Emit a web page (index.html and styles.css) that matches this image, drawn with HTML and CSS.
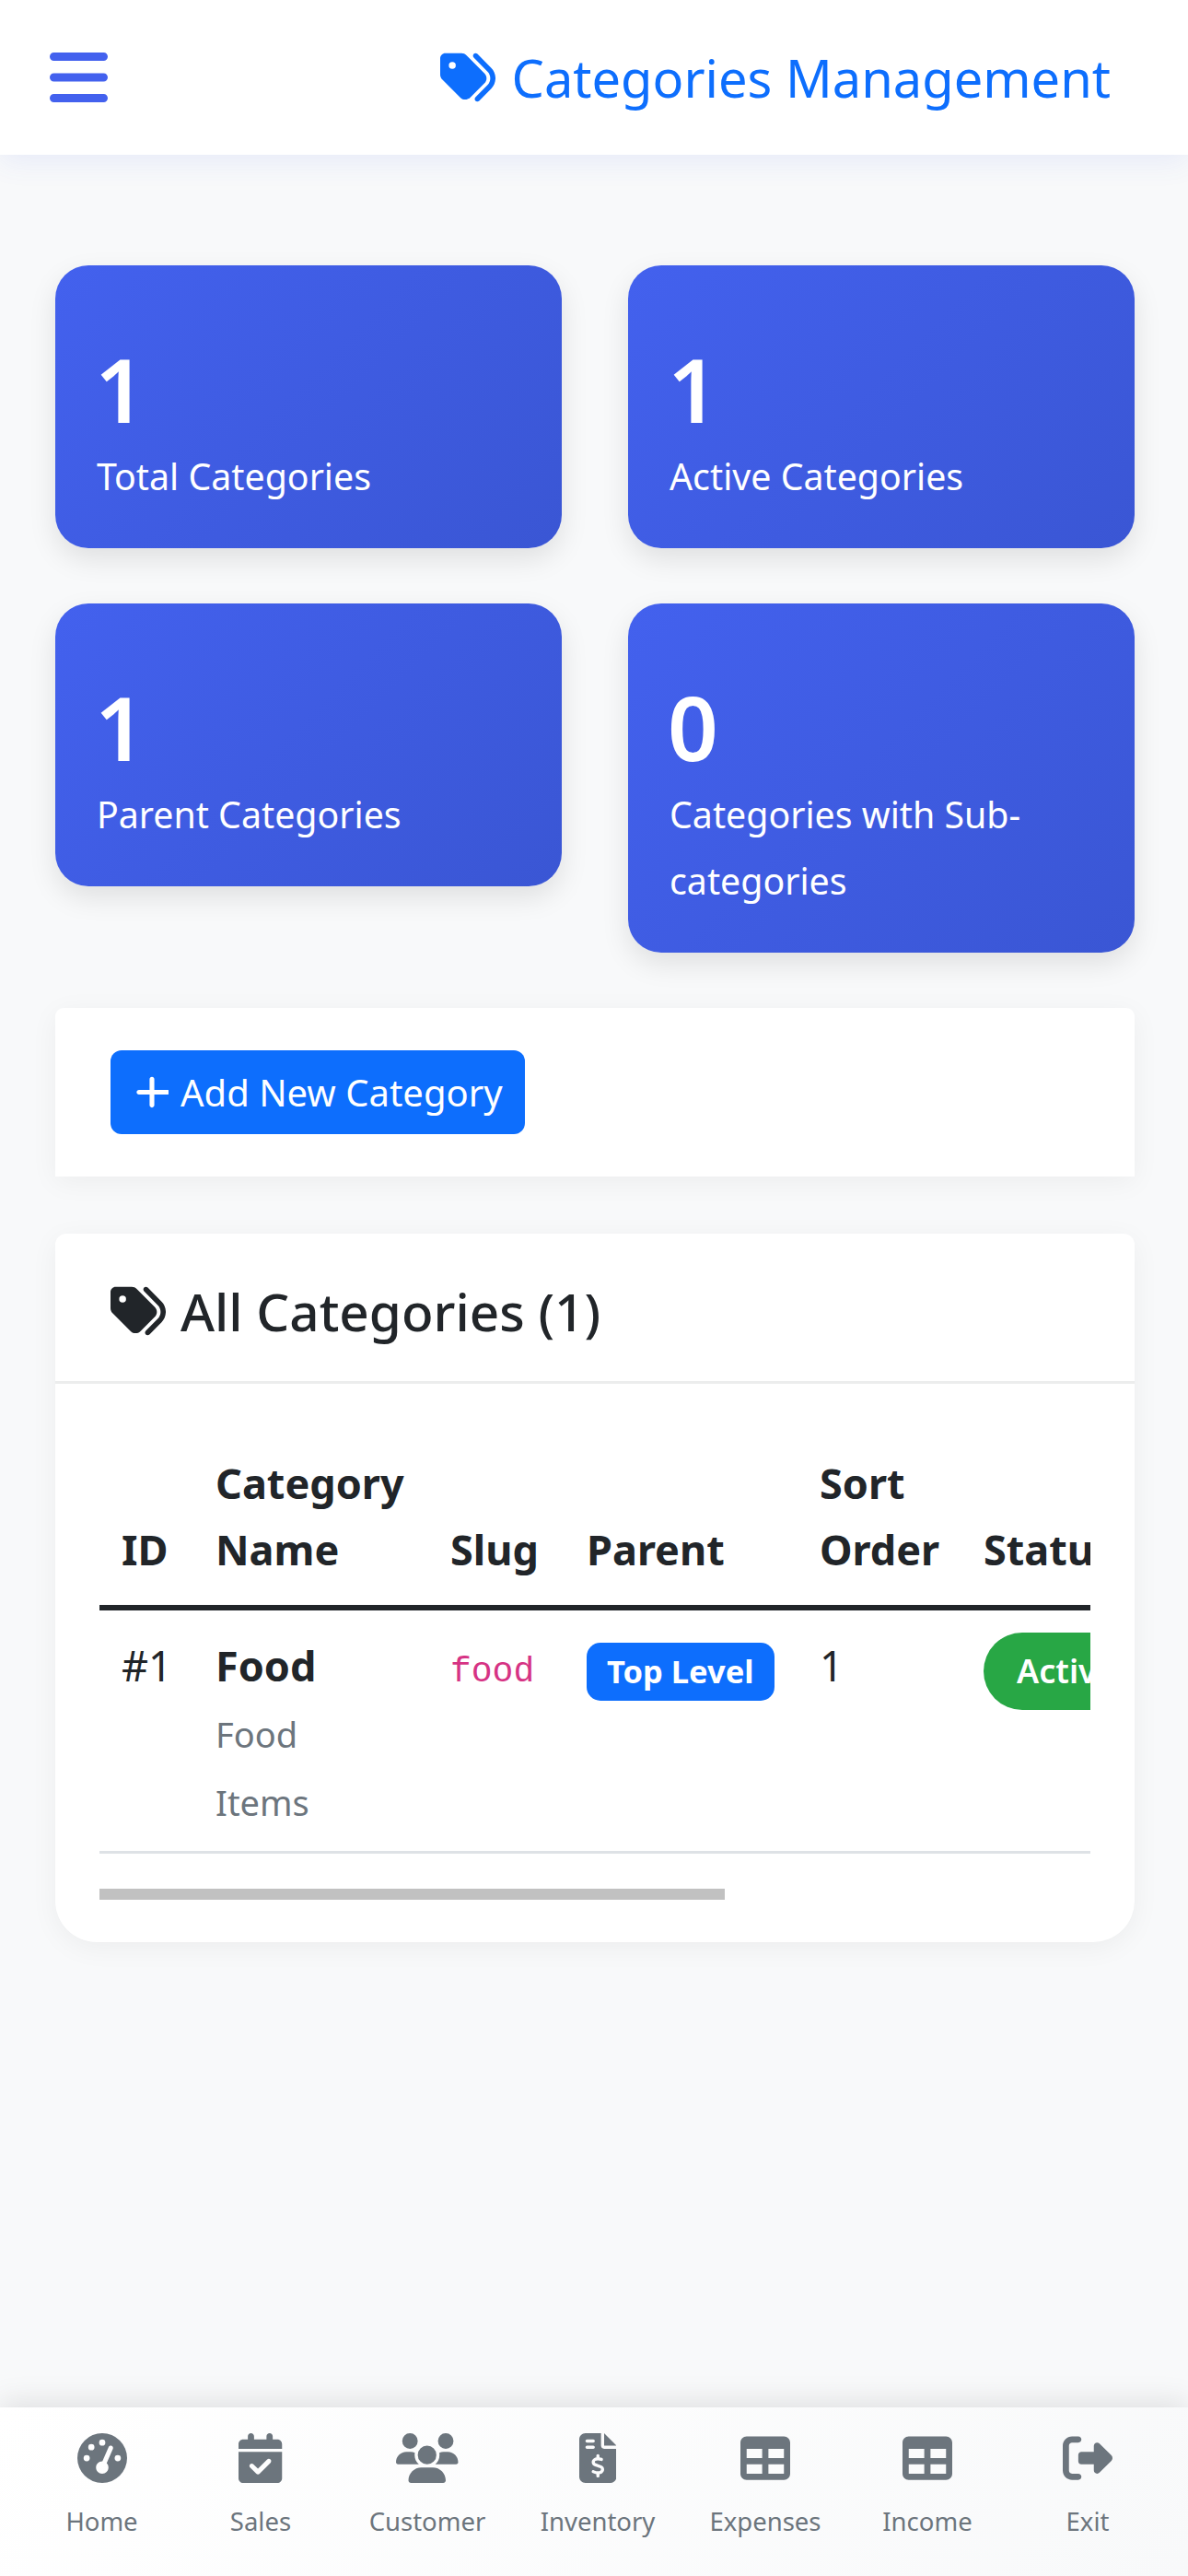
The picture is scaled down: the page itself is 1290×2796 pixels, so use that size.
FILE: index.html
```html
<!DOCTYPE html>
<html lang="en">
<head>
	<meta charset="UTF-8">
	<title>Categories Management</title>
	<link rel="stylesheet" href="styles.css">
</head>
<body>
	<header class="topbar">
		<svg class="menu-icon" viewBox="0 0 448 512"><path d="M0 96C0 78.3 14.3 64 32 64H416c17.7 0 32 14.3 32 32s-14.3 32-32 32H32C14.3 128 0 113.7 0 96zM0 256c0-17.7 14.3-32 32-32H416c17.7 0 32 14.3 32 32s-14.3 32-32 32H32c-17.7 0-32-14.3-32-32zM448 416c0 17.7-14.3 32-32 32H32c-17.7 0-32-14.3-32-32s14.3-32 32-32H416c17.7 0 32 14.3 32 32z"/></svg>
		<h1 class="page-title">
			<svg class="tag-icon" viewBox="0 0 512 512"><path d="M345 39.1L472.8 168.4c52.4 53 52.4 138.2 0 191.2L360.8 472.9c-9.3 9.4-24.5 9.5-33.9 .2s-9.5-24.5-.2-33.9L438.6 325.9c33.9-34.3 33.9-89.4 0-123.7L310.9 72.9c-9.3-9.4-9.2-24.6 .2-33.9s24.6-9.2 33.9 .2zM0 229.5V80C0 53.5 21.5 32 48 32H197.5c17 0 33.3 6.7 45.3 18.7l168 168c25 25 25 65.5 0 90.5L277.3 442.7c-25 25-65.5 25-90.5 0l-168-168C6.7 262.7 0 246.5 0 229.5zM144 144a32 32 0 1 0 -64 0 32 32 0 1 0 64 0z"/></svg>
			Categories Management
		</h1>
	</header>

	<main class="content">
		<section class="stats">
			<div class="stat"><div class="stat-num">1</div><div class="stat-label">Total Categories</div></div>
			<div class="stat"><div class="stat-num">1</div><div class="stat-label">Active Categories</div></div>
			<div class="stat"><div class="stat-num">1</div><div class="stat-label">Parent Categories</div></div>
			<div class="stat"><div class="stat-num">0</div><div class="stat-label">Categories with Sub-categories</div></div>
		</section>

		<section class="add-card">
			<a href="#" class="add-btn">
				<svg class="plus-icon" viewBox="0 0 448 512"><path d="M256 80c0-17.7-14.3-32-32-32s-32 14.3-32 32V224H48c-17.7 0-32 14.3-32 32s14.3 32 32 32H192V432c0 17.7 14.3 32 32 32s32-14.3 32-32V288H432c17.7 0 32-14.3 32-32s-14.3-32-32-32H256V80z"/></svg>
				Add New Category
			</a>
		</section>

		<section class="list-card">
			<div class="list-head">
				<svg class="tag-icon" viewBox="0 0 512 512"><path d="M345 39.1L472.8 168.4c52.4 53 52.4 138.2 0 191.2L360.8 472.9c-9.3 9.4-24.5 9.5-33.9 .2s-9.5-24.5-.2-33.9L438.6 325.9c33.9-34.3 33.9-89.4 0-123.7L310.9 72.9c-9.3-9.4-9.2-24.6 .2-33.9s24.6-9.2 33.9 .2zM0 229.5V80C0 53.5 21.5 32 48 32H197.5c17 0 33.3 6.7 45.3 18.7l168 168c25 25 25 65.5 0 90.5L277.3 442.7c-25 25-65.5 25-90.5 0l-168-168C6.7 262.7 0 246.5 0 229.5zM144 144a32 32 0 1 0 -64 0 32 32 0 1 0 64 0z"/></svg>
				<h2>All Categories (1)</h2>
			</div>
			<div class="list-body">
				<div class="table-wrap">
					<table class="cat-table">
						<thead>
							<tr>
								<th class="c-id">ID</th>
								<th class="c-name">Category Name</th>
								<th class="c-slug">Slug</th>
								<th class="c-parent">Parent</th>
								<th class="c-sort">Sort Order</th>
								<th class="c-status">Status</th>
								<th>Actions</th>
							</tr>
						</thead>
						<tbody>
							<tr>
								<td>#1</td>
								<td><strong>Food</strong><br><small>Food<br>Items</small></td>
								<td><code>food</code></td>
								<td><span class="badge-top">Top Level</span></td>
								<td>1</td>
								<td><span class="badge-status">Active</span></td>
								<td></td>
							</tr>
						</tbody>
					</table>
				</div>
				<div class="scroll-thumb"></div>
			</div>
		</section>
	</main>

	<nav class="bottom-nav">
		<a href="#" class="nav-item">
			<svg viewBox="0 0 512 512"><path d="M0 256a256 256 0 1 1 512 0A256 256 0 1 1 0 256zM288 96a32 32 0 1 0 -64 0 32 32 0 1 0 64 0zM256 416c35.3 0 64-28.7 64-64c0-17.4-6.9-33.1-18.1-44.6L366 161.7c5.3-12.1-.2-26.3-12.3-31.6s-26.3 .2-31.6 12.3L257.9 288c-.6 0-1.3 0-1.9 0c-35.3 0-64 28.7-64 64s28.7 64 64 64zM176 144a32 32 0 1 0 -64 0 32 32 0 1 0 64 0zM96 288a32 32 0 1 0 0-64 32 32 0 1 0 0 64zm352-32a32 32 0 1 0 -64 0 32 32 0 1 0 64 0z"/></svg>
			<span>Home</span>
		</a>
		<a href="#" class="nav-item">
			<svg viewBox="0 0 448 512"><path d="M128 0c17.7 0 32 14.3 32 32V64H288V32c0-17.7 14.3-32 32-32s32 14.3 32 32V64h48c26.5 0 48 21.5 48 48v48H0V112C0 85.5 21.5 64 48 64H96V32c0-17.7 14.3-32 32-32zM0 192H448V464c0 26.5-21.5 48-48 48H48c-26.5 0-48-21.5-48-48V192zM329 305c9.4-9.4 9.4-24.6 0-33.9s-24.6-9.4-33.9 0l-95 95-47-47c-9.4-9.4-24.6-9.4-33.9 0s-9.4 24.6 0 33.9l64 64c9.4 9.4 24.6 9.4 33.9 0L329 305z"/></svg>
			<span>Sales</span>
		</a>
		<a href="#" class="nav-item">
			<svg viewBox="0 0 640 512"><path d="M144 0a80 80 0 1 1 0 160A80 80 0 1 1 144 0zM512 0a80 80 0 1 1 0 160A80 80 0 1 1 512 0zM0 298.7C0 239.8 47.8 192 106.7 192h42.7c15.9 0 31 3.5 44.6 9.7c-1.3 7.2-1.9 14.7-1.9 22.3c0 38.2 16.8 72.5 43.3 96c-.2 0-.4 0-.7 0H21.3C9.6 320 0 310.4 0 298.7zM405.3 320c-.2 0-.4 0-.7 0c26.6-23.5 43.3-57.8 43.3-96c0-7.6-.7-15-1.9-22.3c13.6-6.3 28.7-9.7 44.6-9.7h42.7C592.2 192 640 239.8 640 298.7c0 11.8-9.6 21.3-21.3 21.3H405.3zM224 224a96 96 0 1 1 192 0 96 96 0 1 1 -192 0zM128 485.3C128 411.7 187.7 352 261.3 352H378.7C452.3 352 512 411.7 512 485.3c0 14.7-11.9 26.7-26.7 26.7H154.7c-14.7 0-26.7-11.9-26.7-26.7z"/></svg>
			<span>Customer</span>
		</a>
		<a href="#" class="nav-item">
			<svg viewBox="0 0 384 512"><path d="M64 0C28.7 0 0 28.7 0 64V448c0 35.3 28.7 64 64 64H320c35.3 0 64-28.7 64-64V160H256c-17.7 0-32-14.3-32-32V0H64zM256 0V128H384L256 0zM64 80c0-8.8 7.2-16 16-16h64c8.8 0 16 7.2 16 16s-7.2 16-16 16H80c-8.8 0-16-7.2-16-16zm0 64c0-8.8 7.2-16 16-16h64c8.8 0 16 7.2 16 16s-7.2 16-16 16H80c-8.8 0-16-7.2-16-16zm128 72c8.8 0 16 7.2 16 16v17.3c8.5 1.2 16.7 3.1 24.1 5.1c8.5 2.3 13.6 11 11.3 19.6s-11 13.6-19.6 11.3c-11.1-3-22-5.2-32.1-5.3c-8.4-.1-17.4 1.8-23.6 5.5c-5.7 3.4-8.1 7.3-8.1 12.8c0 3.7 1.3 6.5 7.3 10.1c6.9 4.1 16.6 7.1 29.2 10.9l.5 .1 0 0 0 0c11.3 3.4 25.3 7.6 36.3 14.6c12.1 7.6 22.4 19.7 22.7 38.2c.3 19.3-9.6 33.3-22.9 41.6c-7.7 4.8-16.4 7.6-25.1 9.1V440c0 8.8-7.2 16-16 16s-16-7.2-16-16V422.2c-11.2-2.1-21.7-5.7-30.9-8.9l0 0c-2.1-.7-4.2-1.4-6.2-2.1c-8.4-2.8-12.9-11.9-10.1-20.2s11.9-12.9 20.2-10.1c2.5 .8 4.8 1.6 7.1 2.4l0 0 0 0 0 0c13.6 4.6 24.6 8.4 36.3 8.7c9.1 .3 17.9-1.7 23.7-5.3c5.1-3.2 7.9-7.3 7.8-14c-.1-4.6-1.8-7.8-7.7-11.6c-6.8-4.3-16.5-7.4-29-11.2l-1.6-.5 0 0c-11-3.3-24.3-7.3-34.8-13.7c-12-7.2-22.6-18.9-22.7-37.3c-.1-19.4 10.8-32.8 23.8-40.5c7.5-4.4 15.8-7.2 24.1-8.7V232c0-8.8 7.2-16 16-16z"/></svg>
			<span>Inventory</span>
		</a>
		<a href="#" class="nav-item">
			<svg viewBox="0 0 512 512"><path d="M64 256V160H224v96H64zm0 64H224v96H64V320zm224 96V320H448v96H288zM448 256H288V160H448v96zM64 32C28.7 32 0 60.7 0 96V416c0 35.3 28.7 64 64 64H448c35.3 0 64-28.7 64-64V96c0-35.3-28.7-64-64-64H64z"/></svg>
			<span>Expenses</span>
		</a>
		<a href="#" class="nav-item">
			<svg viewBox="0 0 512 512"><path d="M64 256V160H224v96H64zm0 64H224v96H64V320zm224 96V320H448v96H288zM448 256H288V160H448v96zM64 32C28.7 32 0 60.7 0 96V416c0 35.3 28.7 64 64 64H448c35.3 0 64-28.7 64-64V96c0-35.3-28.7-64-64-64H64z"/></svg>
			<span>Income</span>
		</a>
		<a href="#" class="nav-item">
			<svg viewBox="0 0 512 512"><path d="M377.9 105.9L500.7 228.7c7.2 7.2 11.3 17.1 11.3 27.3s-4.1 20.1-11.3 27.3L377.9 406.1c-6.4 6.4-15 9.9-24 9.9c-18.7 0-33.9-15.2-33.9-33.9l0-62.1-128 0c-17.7 0-32-14.3-32-32l0-64c0-17.7 14.3-32 32-32l128 0 0-62.1c0-18.7 15.2-33.9 33.9-33.9c9 0 17.6 3.6 24 9.9zM160 96L96 96c-17.7 0-32 14.3-32 32l0 256c0 17.7 14.3 32 32 32l64 0c17.7 0 32 14.3 32 32s-14.3 32-32 32l-64 0c-53 0-96-43-96-96L0 128C0 75 43 32 96 32l64 0c17.7 0 32 14.3 32 32s-14.3 32-32 32z"/></svg>
			<span>Exit</span>
		</a>
	</nav>
</body>
</html>
```

FILE: styles.css
```css
*{margin: 0;padding: 0;box-sizing: border-box;}
a{text-decoration: none;}
html,body{height: 100%;}
body{display: flex;flex-direction: column;min-height: 2796px;background: #f8f9fa;color: #212529;font-family: "Noto Sans", "Open Sans", sans-serif;font-size: 45px;line-height: 72px;}

.topbar{display: flex;align-items: center;justify-content: space-between;height: 168px;padding: 0 84px 0 54px;background: #fff;box-shadow: 0 6px 30px rgba(67,97,238,.1);}
.menu-icon{width: 63px;height: 72px;fill: #4361ee;display: block;}
.page-title{display: flex;align-items: center;gap: 18px;color: #0d6efd;font-size: 56px;font-weight: 400;line-height: 84px;}
.tag-icon{width: 60px;height: 60px;fill: currentColor;flex: none;}

.content{flex: 1;padding: 120px 58px 0 60px;}

.stats{display: grid;grid-template-columns: 550px 550px;column-gap: 72px;row-gap: 60px;align-items: start;}
.stat{padding: 45px 45px 43px;border-radius: 36px;color: #fff;background: linear-gradient(135deg, #4361ee, #3a56d4);box-shadow: 0 12px 30px rgba(0,0,0,.1);}
.stat-num{padding-top: 33px;margin: 0 0 3px -2px;font-size: 96px;font-weight: 600;line-height: 111px;}
.stat-label{padding-top: 1px;margin-bottom: -1px;font-size: 39.3px;line-height: 72px;}

.add-card{margin-top: 60px;padding: 46px 60px;height: 183px;background: #fff;border-radius: 9px 9px 0 0;box-shadow: 0 6px 30px rgba(0,0,0,.05);}
.add-btn{display: inline-flex;align-items: center;gap: 13px;height: 91px;padding: 0 24px 0 27px;border-radius: 12px;background: #0d6efd;color: #fff;font-size: 40px;}
.plus-icon{width: 36px;height: 41px;fill: #fff;}

.list-card{margin-top: 62px;background: #fff;border-radius: 12px 12px 45px 45px;box-shadow: 0 6px 30px rgba(0,0,0,.05);}
.list-head{display: flex;align-items: center;gap: 16px;height: 163px;padding: 8px 60px 0;border-bottom: 3px solid #eceded;}
.list-head h2{font-size: 56.6px;font-weight: 500;line-height: 84px;}
.list-body{padding: 48px 48px 46px;}

.table-wrap{overflow: hidden;}
.scroll-thumb{width: 679px;height: 12px;background: #c1c1c1;}

.cat-table{width: 1705px;table-layout: fixed;border-collapse: collapse;margin-bottom: 38px;}
.cat-table th{padding: 24px;border-bottom: 6px solid #212529;text-align: left;vertical-align: bottom;font-size: 45px;font-weight: 700;}
.cat-table td{padding: 24px 24px 17px;border-bottom: 3px solid #dee2e6;vertical-align: top;}
.c-id{width: 102px;}
.c-name{width: 255px;}
.c-slug{width: 148px;}
.c-parent{width: 253px;}
.c-sort{width: 178px;}
.c-status{width: 280px;}
small{font-size: 38px;color: #6c757d;}
code{font-family: "Liberation Mono", monospace;font-size: 38px;color: #d63384;}
.badge-top{display: inline-block;margin-top: 11px;padding: 0 22px;height: 63px;line-height: 62px;border-radius: 15px;background: #0d6efd;color: #fff;font-size: 34.5px;font-weight: 700;white-space: nowrap;vertical-align: top;}
.badge-status{display: inline-block;padding: 0 36px;height: 84px;line-height: 84px;border-radius: 42px;background: #28a745;color: #fff;font-size: 36px;font-weight: 600;vertical-align: top;}

.bottom-nav{display: grid;grid-template-columns: 173px 172px 190px 180px 184px 168px 180px;height: 183px;padding: 28px 0 0 24px;background: linear-gradient(135deg, #fff, #f8f9fa);box-shadow: 0 -6px 30px rgba(0,0,0,.1);}
.nav-item{display: flex;flex-direction: column;align-items: center;gap: 21px;color: #6c757d;font-size: 27.5px;line-height: 42px;}
.nav-item svg{height: 54px;width: auto;fill: currentColor;display: block;}
```
